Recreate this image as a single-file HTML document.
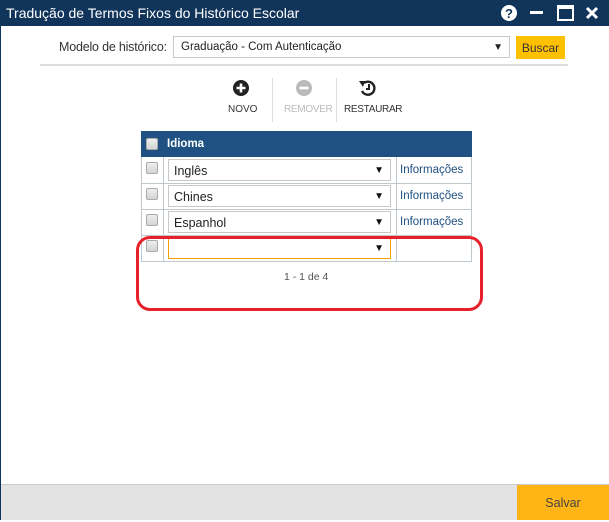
<!DOCTYPE html>
<html><head><meta charset="utf-8"><style>
*{margin:0;padding:0;box-sizing:border-box}
body{width:609px;height:520px;position:relative;background:#fff;font-family:"Liberation Sans",sans-serif;overflow:hidden}
.a{position:absolute}
.title{left:0;top:0;width:609px;height:26px;background:#10345a;color:#fff;font-size:14px;line-height:26px;padding-left:6px}
.cb{position:absolute;width:12px;height:12px;border:1px solid #aaa;border-radius:2px;background:linear-gradient(#eee,#d4d4d4)}
.sel{position:absolute;left:168px;width:223px;height:22px;border:1px solid #c8c8c8;font-size:12.5px;line-height:22px;padding-left:5px;color:#222}
.sel:after{content:"▼";position:absolute;right:6px;top:0;font-size:10px;color:#111}
.info{position:absolute;left:400px;font-size:11.5px;color:#1f4f7f}
.hl{position:absolute;background:#bfc8cc}
</style></head><body>
<div class="a title">Tradução de Termos Fixos do Histórico Escolar</div>
<svg class="a" style="left:500px;top:4px" width="18" height="18"><circle cx="9" cy="9" r="8" fill="#fff"/><text x="9" y="14" font-size="13" font-weight="bold" text-anchor="middle" fill="#10345a" font-family="Liberation Sans">?</text></svg>
<div class="a" style="left:530px;top:11px;width:13px;height:3px;background:#fff"></div>
<div class="a" style="left:557px;top:5px;width:17px;height:16px;border:2px solid #fff;border-top-width:4px"></div>
<svg class="a" style="left:585px;top:6px" width="14" height="14"><path d="M2 2L12 12M12 2L2 12" stroke="#fff" stroke-width="3"/></svg>
<div class="a" style="left:0;top:26px;width:1px;height:494px;background:#10345a"></div>
<div class="a" style="left:59px;top:40px;font-size:12.5px;color:#333;letter-spacing:-0.2px">Modelo de histórico:</div>
<div class="a" style="left:173px;top:36px;width:337px;height:22px;border:1px solid #c8c8c8;font-size:11.5px;line-height:21px;padding-left:7px;color:#222">Graduação - Com Autenticação<span style="position:absolute;right:6px;font-size:10px">▼</span></div>
<div class="a" style="left:516px;top:36px;width:49px;height:23px;background:#ffc000;font-size:12px;line-height:25px;text-align:center;color:#333">Buscar</div>
<div class="a" style="left:40px;top:64px;width:528px;height:2px;background:#ddd"></div>
<svg class="a" style="left:232px;top:79px" width="18" height="18"><circle cx="9" cy="9" r="8" fill="#222"/><path d="M9 4.5V13.5M4.5 9H13.5" stroke="#fff" stroke-width="2.6"/></svg>
<svg class="a" style="left:295px;top:79px" width="18" height="18"><circle cx="9" cy="9" r="8" fill="#bbb"/><path d="M4.5 9H13.5" stroke="#fff" stroke-width="2.6"/></svg>
<svg class="a" style="left:358px;top:79px" width="20" height="18"><path d="M6 4A6.5 6.5 0 1 1 4 12" fill="none" stroke="#222" stroke-width="2.4"/><path d="M1 2L7 2 5 8Z" fill="#222"/><path d="M11 5V10H8" fill="none" stroke="#222" stroke-width="2"/></svg>
<div class="a" style="left:228px;top:104px;font-size:10px;color:#333">NOVO</div>
<div class="a" style="left:284px;top:104px;font-size:10px;color:#bbb;letter-spacing:-0.3px">REMOVER</div>
<div class="a" style="left:344px;top:104px;font-size:10px;color:#333;letter-spacing:-0.3px">RESTAURAR</div>
<div class="a" style="left:272px;top:78px;width:1px;height:44px;background:#ddd"></div>
<div class="a" style="left:336px;top:78px;width:1px;height:44px;background:#ddd"></div>
<div class="a" style="left:141px;top:131px;width:331px;height:26px;background:#1f5283"></div>
<div class="cb" style="left:146px;top:138px"></div>
<div class="a" style="left:167px;top:138px;font-size:11.5px;font-weight:bold;color:#fff">Idioma</div>
<div class="hl" style="left:141px;top:157px;width:1px;height:105px"></div>
<div class="hl" style="left:471px;top:157px;width:1px;height:105px"></div>
<div class="hl" style="left:163px;top:157px;width:1px;height:105px"></div>
<div class="hl" style="left:396px;top:157px;width:1px;height:105px"></div>
<div class="hl" style="left:141px;top:183px;width:331px;height:1px"></div>
<div class="hl" style="left:141px;top:209px;width:331px;height:1px"></div>
<div class="hl" style="left:141px;top:235px;width:331px;height:1px"></div>
<div class="hl" style="left:141px;top:261px;width:331px;height:1px"></div>
<div class="cb" style="left:146px;top:162px"></div>
<div class="cb" style="left:146px;top:188px"></div>
<div class="cb" style="left:146px;top:214px"></div>
<div class="cb" style="left:146px;top:240px"></div>
<div class="sel" style="top:159px">Inglês</div>
<div class="sel" style="top:185px">Chines</div>
<div class="sel" style="top:211px">Espanhol</div>
<div class="sel" style="top:237px;border-color:#f0a000"></div>
<div class="info" style="top:164px">Informações</div>
<div class="info" style="top:190px">Informações</div>
<div class="info" style="top:216px">Informações</div>
<div class="a" style="left:284px;top:271px;font-size:10.5px;color:#555">1 - 1 de 4</div>
<div class="a" style="left:136px;top:236px;width:347px;height:75px;border:3px solid #e8202a;border-radius:14px"></div>
<div class="a" style="left:1px;top:484px;width:608px;height:36px;background:#e3e3e3;border-top:1px solid #ccc"></div>
<div class="a" style="left:517px;top:485px;width:92px;height:35px;background:#ffb515;font-size:12.5px;line-height:37px;text-align:center;color:#444">Salvar</div>
</body></html>
